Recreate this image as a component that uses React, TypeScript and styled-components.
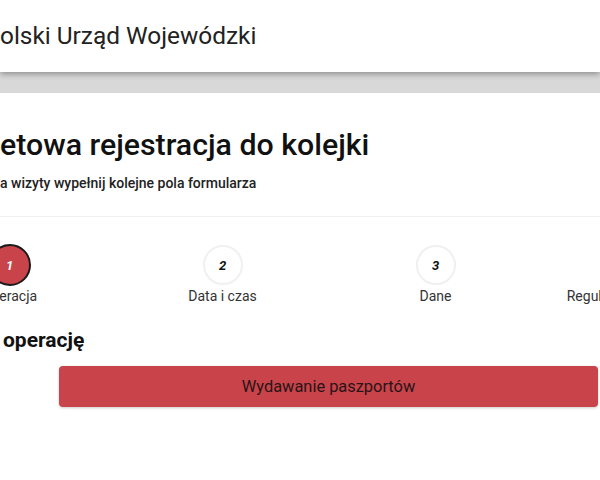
import React from 'react';
import styled, { createGlobalStyle } from 'styled-components';

const Global = createGlobalStyle`
  html, body {
    margin: 0;
    padding: 0;
    background: #d8d8d8;
  }
  body {
    width: 600px;
    height: 480px;
    overflow: hidden;
    font-family: Roboto, "Noto Sans", "Liberation Sans", Arial, sans-serif;
  }
`;

const Page = styled.div`
  width: 600px;
  height: 480px;
  overflow: hidden;
  display: flex;
  flex-direction: column;
  background: #d8d8d8;
`;

const Header = styled.header`
  flex: none;
  height: 72px;
  background: #ffffff;
  box-shadow: 0 2px 6px rgba(0, 0, 0, 0.35);
  display: flex;
  align-items: center;
  position: relative;
  z-index: 1;
`;

const HeaderTitle = styled.h1`
  margin: 0 0 1px;
  font-size: 24.4px;
  font-weight: 400;
  color: #222;
  white-space: nowrap;
`;

const Card = styled.main`
  flex: 1;
  margin-top: 21px;
  background: #ffffff;
  display: flex;
  flex-direction: column;
`;

const Intro = styled.section`
  padding: 34px 0 25px;
  border-bottom: 1px solid #f0f0f0;
`;

const Title = styled.h2`
  margin: 0;
  font-size: 30.3px;
  line-height: 36px;
  font-weight: 500;
  color: #111;
  white-space: nowrap;
`;

const Subtitle = styled.p`
  margin: 12px 0 0;
  font-size: 14px;
  font-weight: 500;
  color: #222;
  white-space: nowrap;
`;

const Stepper = styled.ol`
  list-style: none;
  margin: 27px 0 0 -97px;
  padding: 0;
  display: grid;
  grid-template-columns: repeat(4, 213px);
`;

const Step = styled.li`
  display: flex;
  flex-direction: column;
  align-items: center;
  gap: 2px;
`;

const StepCircle = styled.span<{ $active?: boolean }>`
  box-sizing: border-box;
  width: ${(p) => (p.$active ? 42 : 40)}px;
  height: ${(p) => (p.$active ? 42 : 40)}px;
  border-radius: 50%;
  display: flex;
  align-items: center;
  justify-content: center;
  background: ${(p) => (p.$active ? '#c8434a' : '#ffffff')};
  border: 2px solid ${(p) => (p.$active ? '#1a1a1a' : '#f0f0f0')};
  color: ${(p) => (p.$active ? '#ffffff' : '#111')};
  font-size: 13px;
  font-weight: 700;
  font-style: italic;
  margin-top: ${(p) => (p.$active ? 0 : 1)}px;
  margin-bottom: ${(p) => (p.$active ? 0 : 1)}px;
`;

const StepLabel = styled.span`
  font-size: 14px;
  color: #333;
  white-space: nowrap;
`;

const Operations = styled.section`
  padding: 24px 2px 0 3px;
  display: flex;
  flex-direction: column;
`;

const SectionHeading = styled.h3`
  margin: 0;
  font-size: 21px;
  line-height: 24px;
  font-weight: 700;
  color: #111;
`;

const OperationButton = styled.button`
  margin: 14px 0 0 56px;
  height: 41px;
  border: none;
  border-radius: 4px;
  background: #c8434a;
  color: #2a1416;
  font-family: inherit;
  font-size: 16.4px;
  box-shadow: 0 1px 3px rgba(0, 0, 0, 0.2);
  cursor: pointer;
`;

const steps = [
  { n: '1', label: 'Operacja', active: true },
  { n: '2', label: 'Data i czas' },
  { n: '3', label: 'Dane' },
  { n: '4', label: 'Regulamin i potwierdzenie' },
];

export default function App() {
  return (
    <Page>
      <Global />
      <Header>
        <HeaderTitle>olski Urząd Wojewódzki</HeaderTitle>
      </Header>
      <Card>
        <Intro>
          <Title>etowa rejestracja do kolejki</Title>
          <Subtitle>a wizyty wypełnij kolejne pola formularza</Subtitle>
        </Intro>
        <Stepper>
          {steps.map((s) => (
            <Step key={s.n}>
              <StepCircle $active={s.active}>{s.n}</StepCircle>
              <StepLabel>{s.label}</StepLabel>
            </Step>
          ))}
        </Stepper>
        <Operations>
          <SectionHeading>operację</SectionHeading>
          <OperationButton>Wydawanie paszportów</OperationButton>
        </Operations>
      </Card>
    </Page>
  );
}
